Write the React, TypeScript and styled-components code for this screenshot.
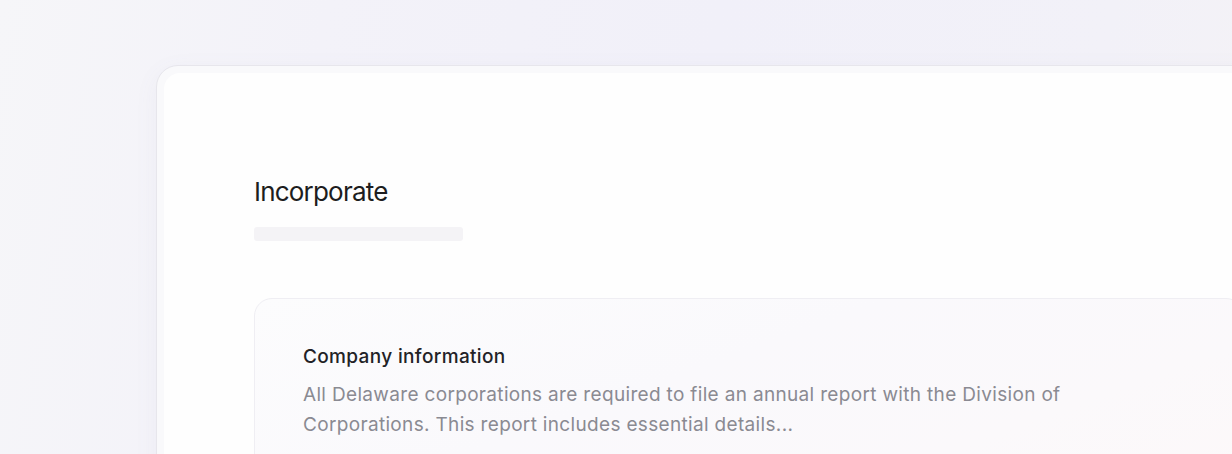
import React from "react";
import styled, { createGlobalStyle } from "styled-components";

const GlobalStyle = createGlobalStyle`
  html, body {
    margin: 0;
    padding: 0;
    height: 100%;
  }
  body {
    font-family: Inter, "Noto Sans", sans-serif;
    background: linear-gradient(100deg, #f6f6f9 0%, #f3f2f9 25%, #f1f0f9 55%, #f2f1f8 85%, #f4f2f6 100%);
    overflow: hidden;
    -webkit-font-smoothing: antialiased;
  }
`;

const Stage = styled.div`
  width: 1232px;
  height: 454px;
  overflow: hidden;
  padding: 65px 0 0 156px;
  box-sizing: border-box;
`;

const Frame = styled.div`
  width: 1140px;
  height: 520px;
  box-sizing: border-box;
  padding: 7px;
  border: 1px solid #e7e6ec;
  border-radius: 22px;
  background: #f9f9fb;
  box-shadow: 0 6px 24px rgba(120, 115, 150, 0.06);
`;

const Panel = styled.div`
  height: 100%;
  box-sizing: border-box;
  padding: 103px 0 0 90px;
  border-radius: 16px;
  background: #fefefe;
  display: flex;
  flex-direction: column;
`;

const Title = styled.h1`
  margin: 0;
  font-family: Inter, sans-serif;
  font-size: 26px;
  line-height: 32px;
  font-weight: 400;
  letter-spacing: -0.8px;
  color: #1d1d20;
`;

const Skeleton = styled.div<{ $width: number }>`
  margin-top: 19px;
  width: ${(p) => p.$width}px;
  height: 14px;
  border-radius: 3px;
  background: #f4f3f6;
`;

const Card = styled.section`
  margin-top: 57px;
  width: 990px;
  height: 220px;
  box-sizing: border-box;
  padding: 44px 0 0 48px;
  border: 1px solid #efeef3;
  border-radius: 18px;
  background: linear-gradient(160deg, #fcfcfd 0%, #faf9fc 40%, #fbf9fb 70%, #fdf8f9 100%);
  display: flex;
  flex-direction: column;
  gap: 9px;
`;

const CardTitle = styled.h2`
  margin: 0;
  font-family: Inter, sans-serif;
  font-size: 19px;
  line-height: 28px;
  font-weight: 500;
  letter-spacing: 0.35px;
  color: #222226;
`;

const CardText = styled.p`
  margin: 0;
  max-width: 800px;
  font-family: Inter, sans-serif;
  font-size: 19px;
  line-height: 30px;
  font-weight: 400;
  letter-spacing: 0.33px;
  color: #8a8a92;
`;

export default function App() {
  return (
    <>
      <GlobalStyle />
      <Stage>
        <Frame>
          <Panel>
            <Title>Incorporate</Title>
            <Skeleton $width={209} />
            <Card>
              <CardTitle>Company information</CardTitle>
              <CardText>
                All Delaware corporations are required to file an annual report with the Division of
                Corporations. This report includes essential details...
              </CardText>
            </Card>
          </Panel>
        </Frame>
      </Stage>
    </>
  );
}
